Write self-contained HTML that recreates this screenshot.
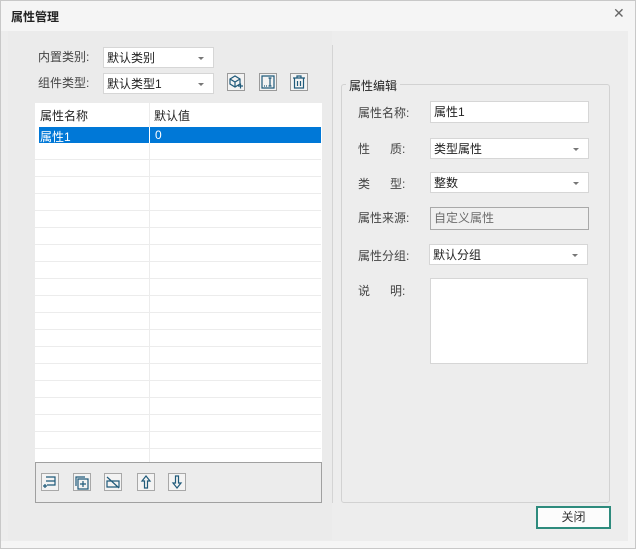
<!DOCTYPE html>
<html><head><meta charset="utf-8"><style>
*{margin:0;padding:0;box-sizing:border-box}
body{width:636px;height:549px;background:#f5f5f5;font-family:"Liberation Sans","Noto Sans CJK SC",sans-serif;font-size:12px;color:#333;position:relative;overflow:hidden}
.a{position:absolute}
.win{left:0;top:0;width:636px;height:549px;border:1px solid #c8c8c8}
.combo,.txt{background:#fff;border:1px solid #d6d6d6;padding-left:3px;line-height:20px;color:#222}
.combo:after{content:"";position:absolute;right:9px;top:9px;border-left:3px solid transparent;border-right:3px solid transparent;border-top:3px solid #777}
.lbl{color:#444}
.row{left:0;width:286px;height:17px;border-bottom:1px solid #ececec}
</style></head><body>
<div class="a win"></div>
<div class="a" style="left:11px;top:8px;font-size:12px;font-weight:bold;color:#222">属性管理</div>
<div class="a" style="left:613px;top:5px;font-size:14px;color:#666">✕</div>
<div class="a" style="left:1px;top:31px;width:627px;height:510px;background:#ededed"></div>
<div class="a" style="left:8px;top:31px;width:324px;height:509px;background:#ebebeb"></div>
<div class="a" style="left:332px;top:45px;width:1px;height:458px;background:#d4d4d4"></div>

<div class="a lbl" style="left:38px;top:48px">内置类别:</div>
<div class="a combo" style="left:103px;top:47px;width:111px;height:21px">默认类别</div>
<div class="a lbl" style="left:38px;top:74px">组件类型:</div>
<div class="a combo" style="left:103px;top:73px;width:111px;height:21px">默认类型1</div>
<svg class="a" style="left:227px;top:73px" width="18" height="19" viewBox="0 0 18 19"><rect x="0.5" y="0.5" width="17" height="17" fill="#f3f3f3" stroke="#9a9a9a"/><path d="M3 6l5-3 5 3v5l-5 3-5-3zM3 6l5 3 5-3M8 9v5M11 13h5M13.5 10.5v5" fill="none" stroke="#1f5a7a" stroke-width="1.2"/></svg>
<svg class="a" style="left:259px;top:73px" width="18" height="19" viewBox="0 0 18 19"><rect x="0.5" y="0.5" width="17" height="17" fill="#f3f3f3" stroke="#9a9a9a"/><path d="M3 3h12v12H3zM11 5v8M9.5 5h3M9.5 13h3M5 13h1M7 13h1" fill="none" stroke="#1f5a7a" stroke-width="1.2"/></svg>
<svg class="a" style="left:290px;top:73px" width="18" height="19" viewBox="0 0 18 19"><rect x="0.5" y="0.5" width="17" height="17" fill="#f3f3f3" stroke="#9a9a9a"/><path d="M3 5h12M7 5V3h4v2M4.5 5v10h9V5M7.5 8v5M10.5 8v5" fill="none" stroke="#1f5a7a" stroke-width="1.2"/></svg>

<div class="a" style="left:35px;top:103px;width:287px;height:359px;background:#fff;overflow:hidden">
 <div class="a" style="left:114px;top:0;width:1px;height:359px;background:#ececec"></div>
 <div class="a" style="left:5px;top:4px;color:#222">属性名称</div>
 <div class="a" style="left:119px;top:4px;color:#222">默认值</div>
 <div class="a" style="left:4px;top:24px;width:282px;height:16px;background:#0078d7"></div>
 <div class="a" style="left:114px;top:24px;width:1px;height:16px;background:#fff"></div>
 <div class="a" style="left:5px;top:25px;color:#fff">属性1</div>
 <div class="a" style="left:120px;top:25px;color:#fff">0</div>
 <div class="a row" style="top:40px"></div><div class="a row" style="top:57px"></div><div class="a row" style="top:74px"></div><div class="a row" style="top:91px"></div><div class="a row" style="top:108px"></div><div class="a row" style="top:125px"></div><div class="a row" style="top:142px"></div><div class="a row" style="top:159px"></div><div class="a row" style="top:176px"></div><div class="a row" style="top:193px"></div><div class="a row" style="top:210px"></div><div class="a row" style="top:227px"></div><div class="a row" style="top:244px"></div><div class="a row" style="top:261px"></div><div class="a row" style="top:278px"></div><div class="a row" style="top:295px"></div><div class="a row" style="top:312px"></div><div class="a row" style="top:329px"></div>
</div>
<div class="a" style="left:35px;top:462px;width:287px;height:41px;border:1px solid #a0a0a0;background:#ececec"></div>
<svg class="a" style="left:41px;top:473px" width="160" height="19" viewBox="0 0 160 19">
<g fill="#f3f3f3" stroke="#a8a8a8"><rect x="0.5" y="0.5" width="17" height="17"/><rect x="32.5" y="0.5" width="17" height="17"/><rect x="63.5" y="0.5" width="17" height="17"/><rect x="96.5" y="0.5" width="17" height="17"/><rect x="127.5" y="0.5" width="17" height="17"/></g>
<g fill="none" stroke="#1f5a7a" stroke-width="1.2">
<path d="M5 4h9v4H5M14 8v4H6M2 13h4M4 11v4"/>
<path d="M35 13V4h9M37 6h10v10H37zM42 8v6M39 11h6"/>
<path d="M66 8h12v6H66zM66 4l12 11"/>
<path d="M105 3l-4 5h2.5v7h3V8h2.5z"/>
<path d="M136 15l-4-5h2.5V3h3v7h2.5z"/>
</g></svg>

<div class="a" style="left:341px;top:84px;width:269px;height:419px;border:1px solid #d2d2d2;border-radius:3px"></div>
<div class="a" style="left:346px;top:77px;padding:0 3px;background:#ededed;color:#222">属性编辑</div>
<div class="a lbl" style="left:358px;top:104px">属性名称:</div>
<div class="a txt" style="left:430px;top:101px;width:159px;height:22px">属性1</div>
<div class="a lbl" style="left:358px;top:140px">性&nbsp;&nbsp;&nbsp;&nbsp;&nbsp;&nbsp;质:</div>
<div class="a combo" style="left:430px;top:138px;width:159px;height:21px">类型属性</div>
<div class="a lbl" style="left:358px;top:175px">类&nbsp;&nbsp;&nbsp;&nbsp;&nbsp;&nbsp;型:</div>
<div class="a combo" style="left:430px;top:172px;width:159px;height:21px">整数</div>
<div class="a lbl" style="left:358px;top:209px">属性来源:</div>
<div class="a" style="left:430px;top:207px;width:159px;height:23px;border:1px solid #a9a9a9;background:#f0f0f0;color:#6d6d6d;padding-left:3px;line-height:21px">自定义属性</div>
<div class="a lbl" style="left:358px;top:247px">属性分组:</div>
<div class="a combo" style="left:429px;top:244px;width:159px;height:21px">默认分组</div>
<div class="a lbl" style="left:358px;top:282px">说&nbsp;&nbsp;&nbsp;&nbsp;&nbsp;&nbsp;明:</div>
<div class="a" style="left:430px;top:278px;width:158px;height:86px;background:#fff;border:1px solid #d6d6d6"></div>

<div class="a" style="left:536px;top:506px;width:75px;height:23px;border:2px solid #2e8b7d;background:#fcfcfc;text-align:center;line-height:19px;color:#333">关闭</div>
</body></html>
